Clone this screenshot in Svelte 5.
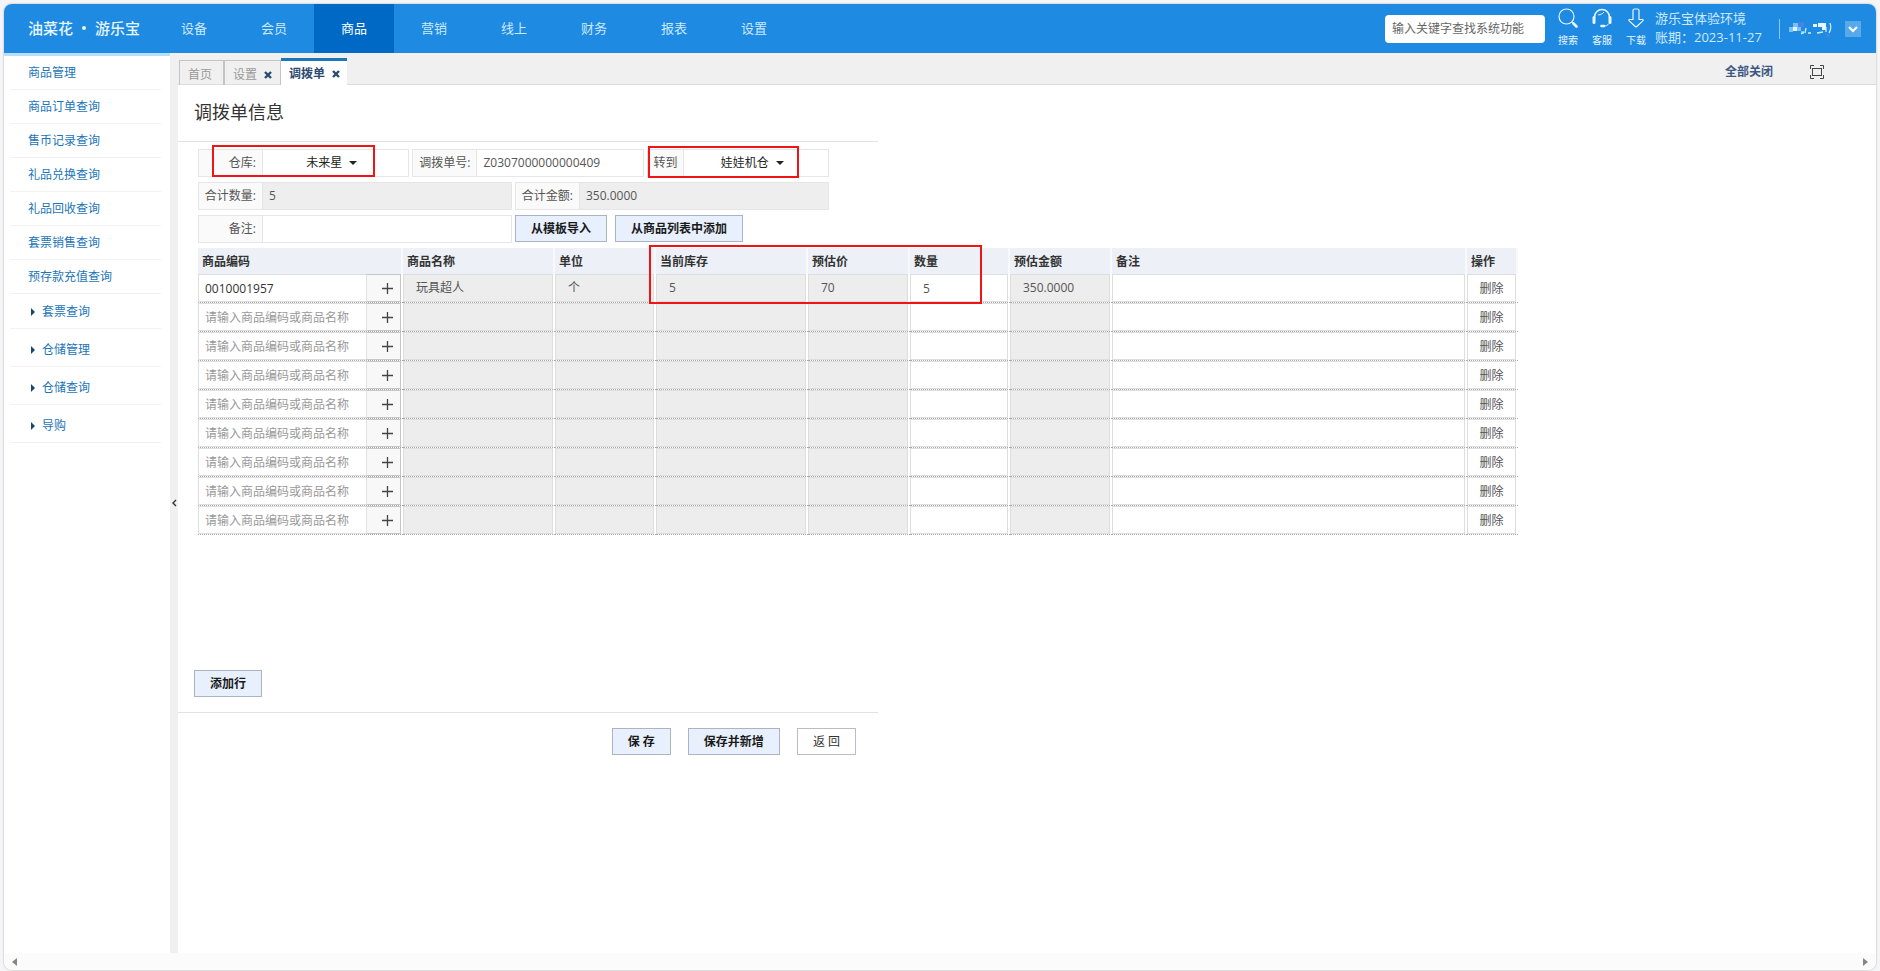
<script lang="ts">
  type Row = {
    code: string;
    name: string;
    unit: string;
    stock: string;
    price: string;
    count: string;
    amount: string;
    remark: string;
  };

  const navItems = ['设备', '会员', '商品', '营销', '线上', '财务', '报表', '设置'];
  const menuItems = [
    '商品管理',
    '商品订单查询',
    '售币记录查询',
    '礼品兑换查询',
    '礼品回收查询',
    '套票销售查询',
    '预存款充值查询'
  ];
  const menuGroups = ['套票查询', '仓储管理', '仓储查询', '导购'];

  const columns = [
    { title: '商品编码', width: 205 },
    { title: '商品名称', width: 152 },
    { title: '单位', width: 101 },
    { title: '当前库存', width: 152 },
    { title: '预估价', width: 102 },
    { title: '数量', width: 100 },
    { title: '预估金额', width: 102 },
    { title: '备注', width: 0 },
    { title: '操作', width: 51 }
  ];

  const emptyRow = (): Row => ({
    code: '',
    name: '',
    unit: '',
    stock: '',
    price: '',
    count: '',
    amount: '',
    remark: ''
  });

  let activeNav = $state('商品');
  let remark = $state('');
  let rows = $state<Row[]>([
    {
      code: '0010001957',
      name: '玩具超人',
      unit: '个',
      stock: '5',
      price: '70',
      count: '5',
      amount: '350.0000',
      remark: ''
    },
    ...Array.from({ length: 8 }, emptyRow)
  ]);

  function addRow() {
    rows.push(emptyRow());
  }

  function removeRow(index: number) {
    rows.splice(index, 1);
  }
</script>

{#snippet cross()}
  <svg width="8" height="8" viewBox="0 0 8 8" aria-hidden="true">
    <path d="M1 1l6 6M7 1l-6 6" stroke="currentColor" stroke-width="2.4" />
  </svg>
{/snippet}

<div class="window">
  <header class="topbar">
    <div class="logo">油菜花 <i></i> 游乐宝</div>
    <nav class="nav">
      {#each navItems as item}
        <button class="nav-item" class:active={activeNav === item} onclick={() => (activeNav = item)}>
          {item}
        </button>
      {/each}
    </nav>

    <input class="search" type="text" aria-label="查找系统功能" placeholder="输入关键字查找系统功能" />

    <div class="tools">
      <button class="tool">
        <svg width="20" height="20" viewBox="0 0 20 20" fill="none" stroke="currentColor">
          <circle cx="8.5" cy="8.5" r="7.5" stroke-width="1.2" />
          <path d="M14 14l1.5 1.5" stroke-width="1.2" />
          <path d="M15.5 15.5l3 3" stroke-width="2.6" stroke-linecap="round" />
        </svg>
        搜索
      </button>
      <button class="tool">
        <svg width="20" height="20" viewBox="0 0 20 20" fill="none" stroke="currentColor">
          <path d="M2.5 10V9a7.5 7.5 0 0 1 15 0v1" stroke-width="1.6" />
          <path d="M6 7c3-.3 4.5-1.2 6-3" stroke-width="1" />
          <path d="M2 9.5v5M18 9.5v5" stroke-width="3" stroke-linecap="round" />
          <path d="M17 15.5c-1.5 2-3 2.500-5 2.500" stroke-width="1" />
          <path d="M9.5 18h2.5" stroke-width="2.6" stroke-linecap="round" />
        </svg>
        客服
      </button>
      <button class="tool">
        <svg width="20" height="20" viewBox="0 0 20 20" fill="none" stroke="currentColor">
          <path
            d="M7 2.5q0-1.5 1.5-1.5h3q1.5 0 1.5 1.5v9h3q2 0 .8 1.400l-6 5.600q-.8.800-1.600 0l-6-5.600q-1.200-1.400.8-1.400h3z"
            stroke-width="1.2"
          />
        </svg>
        下载
      </button>
    </div>

    <div class="account">
      <span>游乐宝体验环境</span>
      <span>账期：2023-11-27</span>
    </div>

    <!-- masked user name -->
    <svg class="user" width="46" height="20" viewBox="0 0 46 20" aria-hidden="true">
      <path fill="#8fd0ff" opacity=".8" d="M1 8h4v5h-4zM9 8h4v4h-4zM5 4h5v4h-5zM13 12h3v3h-3z" />
      <path fill="#5b7df0" d="M10 3h6v5h-6zM38 15h4v3h-4z" opacity=".7" />
      <path fill="#e6f5ff" d="M5 8h4v4h-4zM25 5h4v3h-4zM30 4h8v4h-8zM34 8h4v3h-4z" />
      <path
        fill="none"
        stroke="#cdeaff"
        d="M16 13l-3 2M18 9l-1 5M20 14h3M29 14l6-1M42 4q2 5-1 10M38 8v5"
        stroke-width="1.3"
      />
    </svg>
    <button class="drop" aria-label="用户菜单">
      <svg width="12" height="8" viewBox="0 0 12 8" aria-hidden="true">
        <path d="M2 2l4 4 4-4" fill="none" stroke="#fff" stroke-width="2.2" />
      </svg>
    </button>
  </header>

  <div class="body">
    <aside class="sidebar">
      <ul>
        {#each menuItems as item}
          <li><a href="#menu">{item}</a></li>
        {/each}
        {#each menuGroups as group}
          <li class="group"><a href="#menu">{group}</a></li>
        {/each}
      </ul>
    </aside>

    <button class="splitter" aria-label="收起菜单">
      <svg width="6" height="8" viewBox="0 0 6 8" aria-hidden="true">
        <path d="M5 1L2 4l3 3" fill="none" stroke="#333" stroke-width="1.4" />
      </svg>
    </button>

    <main class="main">
      <div class="tabbar">
        <div class="tab"><a href="#tab">首页</a></div>
        <div class="tab">
          <a href="#tab">设置</a>
          <button aria-label="关闭设置">{@render cross()}</button>
        </div>
        <div class="tab current">
          <a href="#tab">调拨单</a>
          <button aria-label="关闭调拨单">{@render cross()}</button>
        </div>
        <button class="close-all">全部关闭</button>
        <button class="fullscreen" aria-label="全屏">
          <svg width="14" height="14" viewBox="0 0 14 14" fill="none" stroke="#444" aria-hidden="true">
            <path d="M.5 4V.5H4M10 .5h3.5V4M13.5 10v3.5H10M4 13.5H.5V10" />
            <rect x="2.5" y="3.5" width="9" height="7" />
          </svg>
        </button>
      </div>

      <h1>调拨单信息</h1>

      <form class="sheet" onsubmit={(e) => e.preventDefault()}>
        <div class="fields">
          <div class="line">
            <div class="field mid">
              <label for="from">仓库:</label>
              <div class="pick">
                <span class="choice">
                  <select id="from"><option>未来星</option></select>
                  <i class="caret"></i>
                </span>
              </div>
            </div>
            <div class="field order">
              <label for="no">调拨单号:</label>
              <input id="no" type="text" readonly value="Z0307000000000409" />
            </div>
            <div class="field to">
              <label for="to">转到</label>
              <div class="pick">
                <span class="choice">
                  <select id="to"><option>娃娃机仓</option></select>
                  <i class="caret"></i>
                </span>
              </div>
            </div>
            <span class="mark mark-from"></span>
            <span class="mark mark-to"></span>
          </div>

          <div class="line">
            <div class="field wide">
              <label for="total">合计数量:</label>
              <input id="total" type="text" disabled value="5" />
            </div>
            <div class="field wide">
              <label for="sum">合计金额:</label>
              <input id="sum" type="text" disabled value="350.0000" />
            </div>
          </div>

          <div class="line">
            <div class="field wide">
              <label for="remark">备注:</label>
              <input id="remark" type="text" bind:value={remark} />
            </div>
            <div class="imports">
              <button class="btn primary" type="button">从模板导入</button>
              <button class="btn primary" type="button">从商品列表中添加</button>
            </div>
          </div>
        </div>

        <div class="grid">
          <table>
            <colgroup>
              {#each columns as col}
                <col style:width={col.width ? `${col.width}px` : 'auto'} />
              {/each}
            </colgroup>
            <thead>
              <tr>
                {#each columns as col}
                  <th>{col.title}</th>
                {/each}
              </tr>
            </thead>
            <tbody>
              {#each rows as row, i}
                <tr>
                  <td>
                    <div class="code">
                      <input
                        type="text"
                        aria-label="商品编码"
                        placeholder="请输入商品编码或商品名称"
                        bind:value={row.code}
                      />
                      <button type="button" aria-label="选择商品">
                        <svg width="11" height="11" viewBox="0 0 11 11" aria-hidden="true">
                          <path d="M5.5 0v11M0 5.5h11" stroke="#444" stroke-width="1.3" />
                        </svg>
                      </button>
                    </div>
                  </td>
                  <td><div class="cell">{row.name}</div></td>
                  <td><div class="cell">{row.unit}</div></td>
                  <td><div class="cell">{row.stock}</div></td>
                  <td><div class="cell">{row.price}</div></td>
                  <td><input class="edit" type="text" aria-label="数量" bind:value={row.count} /></td>
                  <td><div class="cell">{row.amount}</div></td>
                  <td><input class="edit" type="text" aria-label="备注" bind:value={row.remark} /></td>
                  <td><button class="remove" type="button" onclick={() => removeRow(i)}>删除</button></td>
                </tr>
              {/each}
            </tbody>
          </table>
          <span class="mark mark-grid"></span>
        </div>

        <div class="add">
          <button class="btn primary" type="button" onclick={addRow}>添加行</button>
        </div>

        <div class="actions">
          <button class="btn primary" type="submit">保 存</button>
          <button class="btn primary" type="button">保存并新增</button>
          <button class="btn" type="button">返 回</button>
        </div>
      </form>
    </main>
  </div>

  <div class="scrollbar">
    <svg width="5" height="8" viewBox="0 0 5 8" aria-hidden="true"><path d="M5 0v8L0 4z" fill="#858585" /></svg>
    <svg width="5" height="8" viewBox="0 0 5 8" aria-hidden="true"><path d="M0 0v8l5-4z" fill="#858585" /></svg>
  </div>
</div>

<style>
  :global(body) {
    background: #f4f5f6;
  }

  :global(#app) {
    min-height: 100vh;
    display: flex;
    box-sizing: border-box;
    padding: 4px 4px 1px;
  }

  .window,
  .window * {
    box-sizing: border-box;
  }

  .window {
    flex: 1;
    min-width: 0;
    display: flex;
    flex-direction: column;
    background: #fff;
    border-radius: 8px;
    box-shadow: 0 0 2px rgba(0, 0, 0, 0.35);
    overflow: hidden;
    font-family: 'Open Sans', 'Noto Sans CJK SC', sans-serif;
    font-size: 12px;
    line-height: 18px;
    color: #333;
  }

  button,
  input,
  select {
    font: inherit;
    color: inherit;
    margin: 0;
    padding: 0;
    border: 0;
    border-radius: 0;
    background: none;
    outline: none;
  }

  button {
    cursor: pointer;
  }

  a {
    color: inherit;
    text-decoration: none;
  }

  /* top bar */
  .topbar {
    display: flex;
    align-items: center;
    height: 49px;
    background: #1e8ae2;
    color: #cbe9ff;
  }

  .logo {
    display: flex;
    align-items: center;
    gap: 9px;
    width: 150px;
    padding: 0 0 2px 24px;
    font-size: 15px;
    font-weight: 500;
    color: #e6f5ff;
    white-space: nowrap;
  }

  .logo i {
    width: 4px;
    height: 4px;
    border-radius: 50%;
    background: #e6f5ff;
  }

  .nav {
    display: flex;
    align-self: stretch;
    margin-right: auto;
  }

  .nav-item {
    width: 80px;
    padding-bottom: 2px;
    font-size: 13px;
  }

  .nav-item.active {
    background: #0069c6;
    color: #fff;
  }

  .search {
    width: 160px;
    height: 28px;
    padding: 0 7px;
    border-radius: 4px;
    background: #fff;
    color: #333;
  }

  .search::placeholder {
    color: #666;
    opacity: 1;
  }

  .tools {
    display: flex;
    gap: 14px;
    padding: 0 9px 2px 13px;
  }

  .tool {
    display: flex;
    flex-direction: column;
    align-items: center;
    gap: 4px;
    width: 20px;
    font-size: 10px;
    line-height: 16px;
    white-space: nowrap;
    color: #e8f6ff;
  }

  .account {
    display: flex;
    flex-direction: column;
    width: 124px;
    padding-bottom: 2px;
    font-size: 13px;
    line-height: 19px;
    white-space: nowrap;
  }

  .user {
    box-sizing: content-box;
    padding-left: 8px;
    border-left: 1px solid #8cc6f5;
  }

  .drop {
    display: flex;
    align-items: center;
    justify-content: center;
    width: 16px;
    height: 16px;
    margin: 0 15px 0 11px;
    background: #56a9eb;
  }

  .body {
    flex: 1;
    display: flex;
  }

  /* side menu */
  .sidebar {
    width: 166px;
    border-top: 3px solid #b5dffb;
    color: #1b75b8;
  }

  .sidebar ul {
    margin: 0;
    padding: 0 9px 0 6px;
    list-style: none;
  }

  .sidebar li {
    border-bottom: 1px solid #f0f2f4;
  }

  .sidebar a {
    display: flex;
    align-items: center;
    height: 33px;
    padding-left: 18px;
  }

  .sidebar .group {
    padding-top: 1px;
  }

  .sidebar .group + .group {
    padding-top: 4px;
  }

  .sidebar .group a {
    gap: 7px;
    padding-left: 21px;
  }

  .group a::before {
    content: '';
    border: 4px solid transparent;
    border-left-color: #17486e;
    border-right: 0;
  }

  .splitter {
    display: flex;
    align-items: center;
    justify-content: center;
    width: 8px;
    background: #f0f0f0;
    cursor: col-resize;
  }

  .main {
    flex: 1;
    min-width: 0;
  }

  /* tabs */
  .tabbar {
    display: flex;
    align-items: flex-end;
    height: 32px;
    padding-left: 1px;
    background: #f0f0f0;
    box-shadow: inset 0 -1px #dcdcdc;
  }

  .tab {
    display: flex;
    align-items: center;
    gap: 7px;
    height: 25px;
    padding: 3px 8px 0;
    border: 1px solid #c4c4c4;
    border-bottom: 0;
    color: #999;
  }

  .tab:first-child {
    padding-right: 11px;
  }

  .tab button {
    display: flex;
    color: #284d6e;
  }

  .tab.current {
    height: 27px;
    padding: 2px 7px 0 8px;
    background: #fff;
    border: 0;
    border-top: 3px solid #1a78ba;
    font-weight: 700;
    color: #2d4a70;
  }

  .close-all {
    align-self: center;
    margin: 5px 37px 0 auto;
    font-weight: 700;
    color: #3f5883;
  }

  .fullscreen {
    display: flex;
    align-self: center;
    margin: 5px 52px 0 0;
  }

  h1 {
    max-width: 700px;
    margin: 0;
    padding: 14px 16px 15px;
    border-bottom: 1px solid #e2e2e2;
    font-size: 18px;
    font-weight: 400;
    line-height: 27px;
  }

  /* header fields */
  .sheet {
    padding-top: 7px;
  }

  .fields {
    display: flex;
    flex-direction: column;
    gap: 5px;
    max-width: 651px;
    padding-left: 20px;
    color: #555;
  }

  .line {
    position: relative;
    display: flex;
    gap: 3px;
  }

  .field {
    display: flex;
    height: 28px;
    border: 1px solid #e6e6e6;
  }

  .field.wide {
    flex: 1 1 314px;
  }

  .field.mid {
    flex: 0 1 212px;
  }

  .field.order {
    flex: 1 1 231px;
  }

  .field.to {
    flex: 0 1 182px;
  }

  .field label {
    display: flex;
    align-items: center;
    justify-content: flex-end;
    width: 64px;
    padding-right: 6px;
    background: #fafafa;
    border-right: 1px solid #e6e6e6;
    white-space: nowrap;
  }

  .field.to label {
    width: 36px;
  }

  .field input {
    flex: 1;
    min-width: 0;
    padding: 0 6px;
  }

  .field input:disabled {
    background: #eee;
    color: #555;
  }

  .pick {
    flex: 1;
    display: flex;
    align-items: center;
    justify-content: center;
    padding-right: 8px;
    color: #222;
  }

  .choice {
    position: relative;
    display: flex;
    align-items: center;
  }

  .choice select {
    appearance: none;
    padding-right: 14px;
  }

  .caret {
    position: absolute;
    right: 0;
    border: 4px solid transparent;
    border-top-color: #222;
    border-bottom: 0;
    pointer-events: none;
  }

  .imports {
    flex: 1 1 314px;
    display: flex;
    gap: 8px;
  }

  .btn {
    height: 27px;
    padding: 0 15px;
    border: 1px solid #b9bcc4;
    background: #fff;
    white-space: nowrap;
  }

  .btn.primary {
    background: #e8f0fe;
    border-color: #aab4c3;
    font-weight: 700;
    color: #1a1a1a;
  }

  /* goods table */
  .grid {
    position: relative;
    max-width: 1320px;
    margin: 5px 0 0 20px;
  }

  table {
    width: 100%;
    table-layout: fixed;
    border-collapse: separate;
    border-spacing: 0;
  }

  th {
    height: 26px;
    padding: 1px 4px 0;
    background: #edf1f7;
    border-right: 2px solid #f7f9fb;
    text-align: left;
    font-weight: 700;
  }

  td {
    height: 29px;
    padding: 0 2px 0 0;
    border-bottom: 1px dotted #aaa;
    vertical-align: top;
  }

  .cell,
  .edit,
  .remove,
  .code {
    display: flex;
    align-items: center;
    width: 100%;
    height: 28px;
    border: 1px solid #dedede;
  }

  .cell,
  .edit {
    padding: 0 12px;
    color: #555;
  }

  .cell {
    background: #ededed;
  }

  .code input {
    flex: 1;
    min-width: 0;
    height: 26px;
    padding-left: 6px;
  }

  .code input::placeholder {
    color: #999;
    opacity: 1;
  }

  .code button {
    display: flex;
    align-items: center;
    justify-content: center;
    width: 35px;
    height: 28px;
    margin-right: -1px;
    padding-left: 7px;
    border: 1px solid #c6c6c6;
    border-left-color: #e2e2e2;
    background: #f8f8f8;
  }

  .remove {
    justify-content: center;
    padding-top: 2px;
    color: #555;
  }

  .add {
    padding: 135px 16px 15px;
    max-width: 700px;
    border-bottom: 1px solid #e2e2e2;
  }

  .actions {
    display: flex;
    justify-content: flex-end;
    gap: 17px;
    max-width: 700px;
    padding: 15px 22px;
  }

  /* highlighted areas */
  .mark {
    position: absolute;
    border: 2px solid #f01414;
    pointer-events: none;
  }

  .mark-from {
    left: 14px;
    top: -4px;
    width: 163px;
    height: 32px;
  }

  .mark-to {
    left: 450px;
    top: -3px;
    width: 151px;
    height: 32px;
  }

  .mark-grid {
    left: 451px;
    top: -3px;
    width: 333px;
    height: 59px;
  }

  .scrollbar {
    display: flex;
    align-items: center;
    justify-content: space-between;
    height: 17px;
    padding: 0 8px;
    background: #fbfbfb;
  }
</style>
